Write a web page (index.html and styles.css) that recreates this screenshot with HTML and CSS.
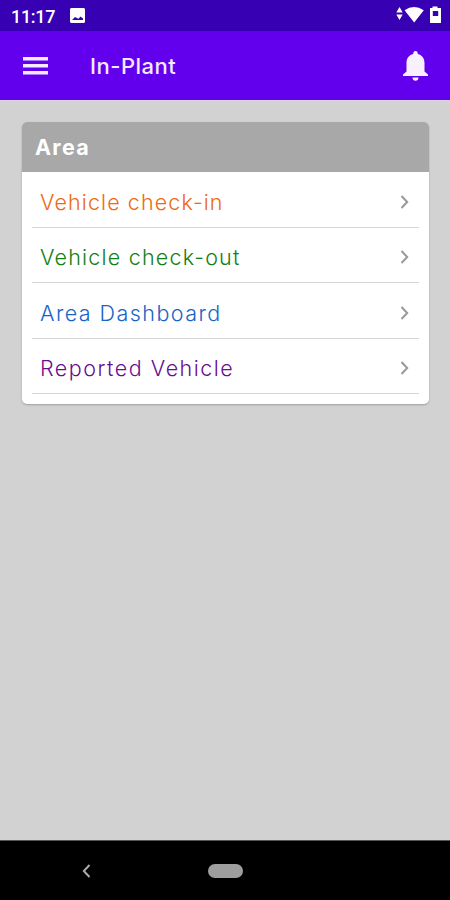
FILE: index.html
```html
<!DOCTYPE html>
<html lang="en">
<head>
<meta charset="utf-8">
<title>In-Plant</title>
<link rel="stylesheet" href="styles.css">
</head>
<body>
<div class="statusbar">
  <span class="clock">11:17</span>
  <svg class="picture" width="15" height="15" viewBox="0 0 15 15"><path fill="#fff" fill-rule="evenodd" d="M1 0h13l1 1v13l-1 1H1l-1-1V1zM2 12h11V10.500L10.500 8.500 8.500 10.800 5 9z"/></svg>
  <svg class="signals" width="47" height="18" viewBox="0 0 47 18"><path fill="#fff" d="M3.500 1 6.700 6.500H.3zM.3 8.500h6.400L3.500 14zM8.500 4.200Q18-2.200 27.800 4.200L18.200 16.500z"/><path fill="#fff" fill-rule="evenodd" d="M36.500 2V.5h5V2H45v15H34V2zM36.800 5v5h5.400V5z"/></svg>
</div>
<header class="appbar">
  <svg width="25" height="18" viewBox="0 0 25 18"><path fill="#f3eaff" d="M0 0h25v3.500H0zM0 7h25v3.500H0zM0 14h25v3.500H0z"/></svg>
  <h1>In-Plant</h1>
  <svg class="bell" width="25" height="30" viewBox="0 0 25 30"><path fill="#f8f0ff" d="M12.500 0c1.500 0 2.300 1 2.300 3 4.500 1 6.700 4.700 6.700 9v8.500l3.500 3V25H0v-1.500l3.500-3V12c0-4.300 2.200-8 6.700-9 0-2 .8-3 2.300-3zM9.500 26.500h6c0 2-1.200 3.300-3 3.300s-3-1.300-3-3.300z"/></svg>
</header>
<main>
  <section class="card">
    <h2>Area</h2>
    <ul>
      <li class="checkin"><span>Vehicle check-in</span><svg width="9" height="14" viewBox="0 0 9 14"><path d="M1.500 1 7.200 7l-5.700 6"/></svg></li>
      <li class="checkout"><span>Vehicle check-out</span><svg width="9" height="14" viewBox="0 0 9 14"><path d="M1.500 1 7.200 7l-5.700 6"/></svg></li>
      <li class="dashboard"><span>Area Dashboard</span><svg width="9" height="14" viewBox="0 0 9 14"><path d="M1.500 1 7.200 7l-5.700 6"/></svg></li>
      <li class="reported"><span>Reported Vehicle</span><svg width="9" height="14" viewBox="0 0 9 14"><path d="M1.500 1 7.200 7l-5.700 6"/></svg></li>
    </ul>
  </section>
</main>
<nav>
  <svg width="9" height="14" viewBox="0 0 9 14"><path fill="none" stroke="#aaa" stroke-width="2" d="M7.500 1 1.800 7l5.700 6"/></svg>
  <span class="home"></span>
</nav>
</body>
</html>
```
FILE: styles.css
```css
* { box-sizing: border-box; }
body {
  margin: 0;
  height: 900px;
  display: flex;
  flex-direction: column;
  background: #d2d2d2;
  font-family: Inter, "Open Sans", sans-serif;
  overflow: hidden;
}
svg { display: block; flex: none; }
.statusbar {
  height: 31px;
  background: #3700b3;
  display: flex;
  align-items: center;
  padding: 0 8px 0 11px;
  color: #fff;
}
.clock {
  font: 500 18px/31px Roboto, sans-serif;
  width: 59px;
  letter-spacing: -0.3px;
  padding-top: 1px;
}
.picture { margin-top: 0; }
.signals { margin-left: auto; margin-top: -1px; margin-right: -1px; }
.appbar {
  height: 70px;
  background: #6200ee;
  border-bottom: 1px solid #dcd2e8;
  display: flex;
  align-items: center;
  padding: 0 22px 0 23px;
}
.appbar h1 {
  margin: 0 0 0 42px;
  color: #f3eaff;
  font-size: 22px;
  font-weight: 500;
  letter-spacing: 0.5px;
}
.bell { margin-left: auto; }
main { flex: 1; padding: 21px 21px 0 22px; }
.card {
  height: 282px;
  background: #fff;
  border-radius: 5px;
  overflow: hidden;
  box-shadow: 0 1px 2px rgba(0, 0, 0, 0.25);
}
.card h2 {
  margin: 0;
  height: 50px;
  padding-left: 13px;
  background: #a8a8a8;
  color: #fff;
  font-size: 21.5px;
  font-weight: 700;
  line-height: 51px;
  letter-spacing: 1.3px;
}
ul { list-style: none; margin: 0; padding: 0 10px; }
li {
  height: 55.5px;
  padding: 5px 10px 0 8px;
  border-bottom: 1.5px solid #d6d6d6;
  display: flex;
  align-items: center;
  justify-content: space-between;
  font-size: 21.5px;
  font-weight: 300;
  letter-spacing: 1.1px;
}
li path { fill: none; stroke: #999; stroke-width: 2; }
.checkin { color: #ed6a13; }
.checkout { color: #128012; letter-spacing: 1.2px; }
.dashboard { color: #1764c8; letter-spacing: 1.45px; }
.reported { color: #6a0d91; letter-spacing: 1.5px; }
nav {
  height: 60px;
  background: #000;
  border-top: 1px solid #555;
  display: flex;
  align-items: center;
  padding-left: 82px;
}
.home {
  width: 35px;
  height: 14px;
  margin-left: 117px;
  border-radius: 7px;
  background: #9e9e9e;
}
```
